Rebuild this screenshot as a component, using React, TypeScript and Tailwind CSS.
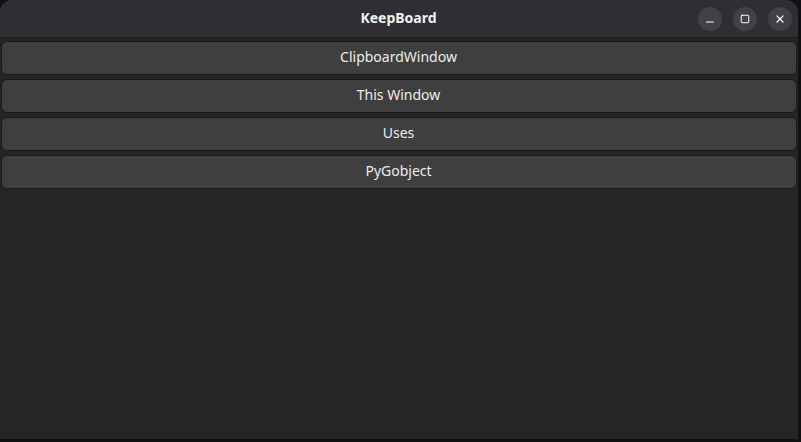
import { Minus, Square, X } from "lucide-react";

const items = ["ClipboardWindow", "This Window", "Uses", "PyGobject"];

export default function App() {
  return (
    <div className="h-[442px] w-[801px] bg-[#111111] font-['Noto_Sans',sans-serif]">
      <div className="flex h-[439px] w-[798px] flex-col overflow-hidden rounded-t-[12px] bg-[#252525]">
        <header className="flex h-[38px] shrink-0 items-center border-b border-[#1b1b1e] bg-[#2e2e33] pl-[9px] pr-[6px]">
          <div className="w-[100px]" />
          <h1 className="flex-1 pb-[2px] pr-[4px] text-center text-[14px] font-bold text-[#f2f2f2]">
            KeepBoard
          </h1>
          <div className="flex w-[100px] justify-end gap-[11px] pt-[1px]">
            <button className="grid size-6 place-items-center rounded-full bg-[#414146] text-white">
              <Minus className="size-3 translate-y-[3px]" strokeWidth={2} />
            </button>
            <button className="grid size-6 place-items-center rounded-full bg-[#414146] text-white">
              <Square className="size-[10px]" strokeWidth={2.4} />
            </button>
            <button className="grid size-6 place-items-center rounded-full bg-[#414146] text-white">
              <X className="size-3" strokeWidth={2.4} />
            </button>
          </div>
        </header>
        <div className="flex flex-col gap-1 px-[1px] pt-[3px]">
          {items.map((item) => (
            <button
              key={item}
              className="h-[34px] w-full rounded-[6px] border border-[#1b1b1b] bg-[#3f3f3f] pb-[3px] pr-[1px] text-[14px] text-[#ececec]"
            >
              {item}
            </button>
          ))}
        </div>
      </div>
    </div>
  );
}
